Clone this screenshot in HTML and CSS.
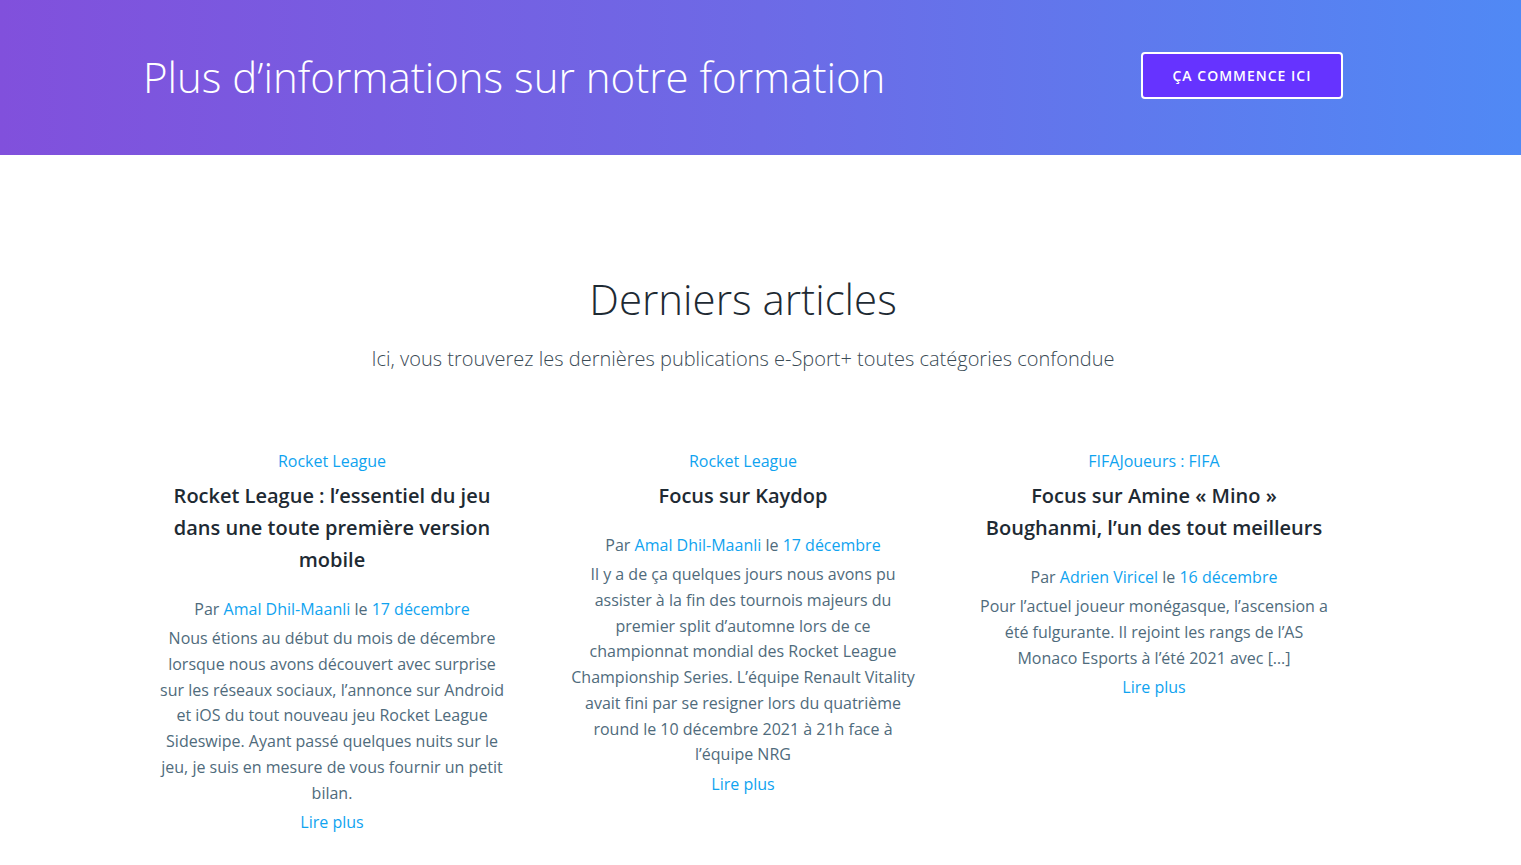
FILE: index.html
```html
<!DOCTYPE html>
<html lang="fr">
<head>
<meta charset="utf-8">
<title>e-Sport+</title>
<link rel="stylesheet" href="styles.css">
</head>
<body>
<section class="hero">
  <div class="container hero-inner">
    <h2 class="hero-title">Plus d’informations sur notre formation</h2>
    <a class="hero-btn" href="#">ÇA COMMENCE ICI</a>
  </div>
</section>
<section class="latest">
  <div class="container">
    <h2 class="latest-title">Derniers articles</h2>
    <p class="latest-sub">Ici, vous trouverez les dernières publications e-Sport+ toutes catégories confondue</p>
    <div class="grid">
      <article class="post">
        <a class="cat" href="#">Rocket League</a>
        <h3 class="post-title">Rocket League : l’essentiel du jeu dans une toute première version mobile</h3>
        <p class="meta">Par <a href="#">Amal Dhil-Maanli</a> le <a href="#">17 décembre</a></p>
        <p class="excerpt">Nous étions au début du mois de décembre lorsque nous avons découvert avec surprise sur les réseaux sociaux, l’annonce sur Android et iOS du tout nouveau jeu Rocket League Sideswipe. Ayant passé quelques nuits sur le jeu, je suis en mesure de vous fournir un petit bilan.</p>
        <a class="more" href="#">Lire plus</a>
      </article>
      <article class="post">
        <a class="cat" href="#">Rocket League</a>
        <h3 class="post-title">Focus sur Kaydop</h3>
        <p class="meta">Par <a href="#">Amal Dhil-Maanli</a> le <a href="#">17 décembre</a></p>
        <p class="excerpt">Il y a de ça quelques jours nous avons pu assister à la fin des tournois majeurs du premier split d’automne lors de ce championnat mondial des Rocket League Championship Series. L’équipe Renault Vitality avait fini par se resigner lors du quatrième round le 10 décembre 2021 à 21h face à l’équipe NRG</p>
        <a class="more" href="#">Lire plus</a>
      </article>
      <article class="post">
        <a class="cat" href="#">FIFAJoueurs : FIFA</a>
        <h3 class="post-title">Focus sur Amine « Mino » Boughanmi, l’un des tout meilleurs</h3>
        <p class="meta">Par <a href="#">Adrien Viricel</a> le <a href="#">16 décembre</a></p>
        <p class="excerpt">Pour l’actuel joueur monégasque, l’ascension a été fulgurante. Il rejoint les rangs de l’AS Monaco Esports à l’été 2021 avec […]</p>
        <a class="more" href="#">Lire plus</a>
      </article>
    </div>
  </div>
</section>
</body>
</html>
```

FILE: styles.css
```css
* { box-sizing: border-box; }
html, body { margin: 0; padding: 0; }
body {
  font-family: "Open Sans", "Liberation Sans", sans-serif;
  background: #fff;
  color: #4f6b7c;
}
a { text-decoration: none; color: #0fa3f0; }
.container {
  width: 1200px;
  margin-left: 143px;
}
.hero {
  height: 155px;
  background: linear-gradient(90deg, #8150dc 0%, #6d6ae6 50%, #5089f5 100%);
}
.hero-inner {
  height: 155px;
  display: flex;
  align-items: center;
  justify-content: space-between;
}
.hero-title {
  margin: 0;
  font-size: 42px;
  font-weight: 300;
  color: #fff;
  line-height: 1.2;
}
.hero-btn {
  display: inline-block;
  width: 202px;
  height: 47px;
  line-height: 43px;
  text-align: center;
  border: 2px solid #fff;
  border-radius: 4px;
  background: #6633ff;
  color: #fff;
  font-size: 14px;
  font-weight: 600;
  letter-spacing: 1px;
  margin-top: -4px;
}
.latest {
  padding-top: 114px;
}
.latest-title {
  margin: 0;
  text-align: center;
  font-size: 42px;
  font-weight: 300;
  line-height: 60px;
  color: #1e2a33;
}
.latest-sub {
  margin: 16px 0 0;
  text-align: center;
  font-size: 20px;
  font-weight: 300;
  line-height: 1.4;
  color: #3a4a55;
}
.grid {
  margin-top: 76px;
  display: grid;
  grid-template-columns: repeat(3, 1fr);
  gap: 33px;
}
.post {
  text-align: center;
  padding: 0 15px;
  font-size: 16px;
  line-height: 25.6px;
}
.cat {
  display: block;
}
.post-title {
  margin: 5px 0 0;
  font-size: 20px;
  font-weight: 600;
  line-height: 32px;
  color: #1e2a33;
}
.meta {
  margin: 21px 0 0;
}
.excerpt {
  margin: 4px 0 0;
  line-height: 25.75px;
}
.more {
  display: block;
  margin-top: 4px;
}
```
